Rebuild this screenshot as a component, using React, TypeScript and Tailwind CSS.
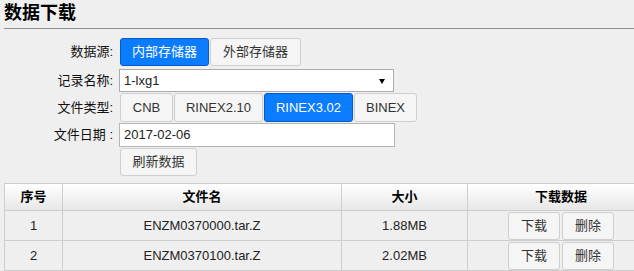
import React from "react";

const font = { fontFamily: '"Liberation Sans", Arial, "Noto Sans CJK SC", sans-serif' };

function Btn({ children, active, w, h = "h-[29px]" }: { children: React.ReactNode; active?: boolean; w: string; h?: string }) {
  return (
    <div
      className={`${w} ${h} flex items-center justify-center rounded-[3px] border text-[13px] ${
        active ? "bg-[#0a7cff] border-[#0a58c8] text-white" : "bg-[#f5f5f5] border-[#cfcfcf] text-[#333]"
      }`}
    >
      {children}
    </div>
  );
}

function Label({ children }: { children: React.ReactNode }) {
  return <div className="w-[114px] pr-[1px] text-right text-[13px] text-[#111]">{children}</div>;
}

export default function App() {
  const rows = [
    { n: "1", f: "ENZM0370000.tar.Z", s: "1.88MB" },
    { n: "2", f: "ENZM0370100.tar.Z", s: "2.02MB" },
  ];
  return (
    <div className="w-[634px] h-[271px] overflow-hidden bg-[#efefef]" style={font}>
      <div className="pl-[4px] pt-[1px]">
        <div className="h-[27px] text-[18px] font-bold leading-[24px] text-black">数据下载</div>
        <div className="h-px bg-[#8c8c8c]" />
      </div>
      <div className="mt-[9px] flex flex-col">
        <div className="flex items-center h-[28px]">
          <Label>数据源:</Label>
          <div className="ml-[6px] flex gap-px">
            <Btn active w="w-[89px]" h="h-[28px]">内部存储器</Btn>
            <Btn w="w-[91px]" h="h-[28px]">外部存储器</Btn>
          </div>
        </div>
        <div className="mt-[3px] flex items-center h-[23px]">
          <Label>记录名称:</Label>
          <div className="ml-[5px] relative w-[275px] h-[23px] bg-white border border-[#ababab] flex items-center pl-[4px] text-[13px] text-[#222]">
            1-lxg1
            <span className="absolute right-[8px] top-[9px] w-0 h-0 border-l-[3px] border-r-[3px] border-t-[5px] border-l-transparent border-r-transparent border-t-black" />
          </div>
        </div>
        <div className="mt-px flex items-center h-[29px]">
          <Label>文件类型:</Label>
          <div className="ml-[6px] flex gap-px">
            <Btn w="w-[53px]">CNB</Btn>
            <Btn w="w-[89px]">RINEX2.10</Btn>
            <Btn active w="w-[89px]">RINEX3.02</Btn>
            <Btn w="w-[63px]">BINEX</Btn>
          </div>
        </div>
        <div className="mt-px flex items-center h-[24px]">
          <Label>文件日期 :</Label>
          <div className="ml-[5px] w-[276px] h-[24px] bg-white border border-[#b5b5b5] flex items-center pl-[4px] text-[13px] text-[#222]">
            2017-02-06
          </div>
        </div>
        <div className="mt-px flex items-center h-[28px]">
          <div className="w-[115px]" />
          <div className="ml-[5px]">
            <Btn w="w-[77px]" h="h-[28px]">刷新数据</Btn>
          </div>
        </div>
      </div>
      <div className="mt-[7px] ml-[4px] w-[650px]">
        <table className="w-[650px] border-collapse text-[13px] text-[#222] table-fixed">
          <colgroup>
            <col className="w-[58px]" />
            <col className="w-[279px]" />
            <col className="w-[126px]" />
            <col className="w-[187px]" />
          </colgroup>
          <thead>
            <tr className="h-[27px] bg-gradient-to-b from-white to-[#e6e6e6]">
              <th className="border border-[#cdcdcd] font-bold text-black">序号</th>
              <th className="border border-[#cdcdcd] font-bold text-black">文件名</th>
              <th className="border border-[#cdcdcd] font-bold text-black">大小</th>
              <th className="border border-[#cdcdcd] font-bold text-black">下载数据</th>
            </tr>
          </thead>
          <tbody>
            {rows.map((r) => (
              <tr key={r.n} className="h-[30px]">
                <td className="border border-[#cdcdcd] text-center">{r.n}</td>
                <td className="border border-[#cdcdcd] text-center">{r.f}</td>
                <td className="border border-[#cdcdcd] text-center">{r.s}</td>
                <td className="border border-[#cdcdcd] p-0">
                  <div className="flex justify-center gap-[2px]">
                    <Btn w="w-[52px]" h="h-[28px]">下载</Btn>
                    <Btn w="w-[52px]" h="h-[28px]">删除</Btn>
                  </div>
                </td>
              </tr>
            ))}
          </tbody>
        </table>
      </div>
    </div>
  );
}
